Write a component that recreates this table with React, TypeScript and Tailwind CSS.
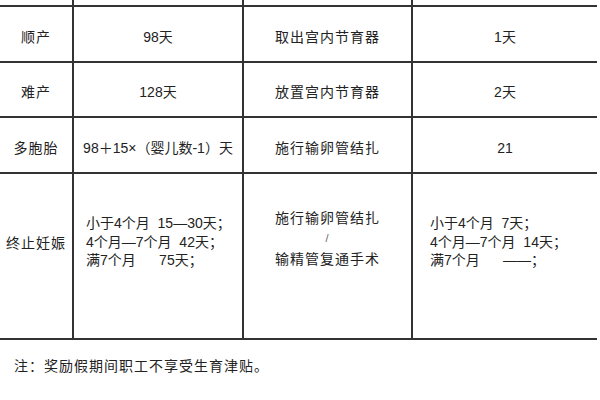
const font = { fontFamily: '"Liberation Sans", "Noto Sans CJK SC", sans-serif' };

const rows = [
  { a: "顺产", b: "98天", c: "取出宫内节育器", d: "1天", h: "h-[56px]" },
  { a: "难产", b: "128天", c: "放置宫内节育器", d: "2天", h: "h-[55px]" },
  { a: "多胞胎", b: "98＋15×（婴儿数-1）天", c: "施行输卵管结扎", d: "21", h: "h-[56px]" },
];

export default function App() {
  return (
    <div className="h-[400px] w-[600px] overflow-hidden bg-white text-[14px] text-[#222]" style={font}>
      <div className="grid w-[597px] grid-cols-[74px_170px_169px_184px]">
        {/* cut-off header row */}
        <div className="h-[7px] border-r-2 border-b-2 border-[#333]" />
        <div className="h-[7px] border-r-2 border-b-2 border-[#333]" />
        <div className="h-[7px] border-r-2 border-b-2 border-[#333]" />
        <div className="h-[7px] border-b-2 border-[#333]" />

        {rows.map((r) => (
          <Row key={r.a} {...r} />
        ))}

        <div className="flex h-[166px] items-start justify-center border-r-2 border-b-2 border-[#333] pt-[59px] tracking-[1px]">
          终止妊娠
        </div>
        <div className="flex h-[166px] flex-col border-r-2 border-b-2 border-[#333] pt-[40px] pl-[12px] leading-[18.5px] whitespace-pre">
          <span>{"小于4个月  15—30天；"}</span>
          <span>{"4个月—7个月  42天；"}</span>
          <span>{"满7个月      75天；"}</span>
        </div>
        <div className="flex h-[166px] flex-col items-center border-r-2 border-b-2 border-[#333] pt-[34px] leading-[20px] tracking-[1px]">
          <span>施行输卵管结扎</span>
          <span className="text-[11px] text-[#666]">/</span>
          <span className="pt-[1px]">输精管复通手术</span>
        </div>
        <div className="flex h-[166px] flex-col border-b-2 border-[#333] pt-[40px] pl-[17px] leading-[18.5px] whitespace-pre">
          <span>{"小于4个月  7天；"}</span>
          <span>{"4个月—7个月  14天；"}</span>
          <span>{"满7个月      ——；"}</span>
        </div>
      </div>

      <p className="pt-[16px] pl-[14px] tracking-[1px]">注：奖励假期间职工不享受生育津贴。</p>
    </div>
  );
}

function Row({ a, b, c, d, h }: { a: string; b: string; c: string; d: string; h: string }) {
  const cell = `flex items-center justify-center border-b-2 border-[#333] pt-[6px] ${h}`;
  return (
    <>
      <div className={`${cell} border-r-2 tracking-[1px]`}>{a}</div>
      <div className={`${cell} border-r-2`}>{b}</div>
      <div className={`${cell} border-r-2 tracking-[1px]`}>{c}</div>
      <div className={cell}>{d}</div>
    </>
  );
}
